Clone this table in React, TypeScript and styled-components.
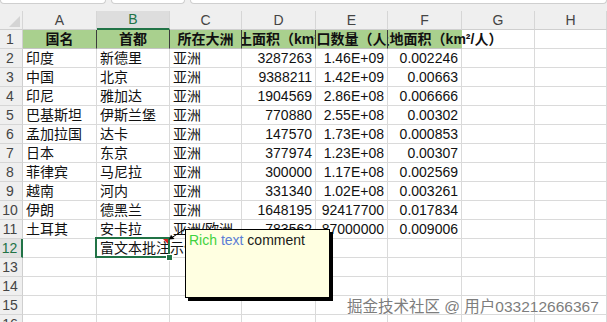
import React from 'react';
import styled, {createGlobalStyle} from 'styled-components';

const GlobalStyle = createGlobalStyle`
  html, body {
    margin: 0;
    padding: 0;
    background: #ffffff;
    overflow: hidden;
  }
  body {
    font-family: "Liberation Sans", "Noto Sans CJK SC", sans-serif;
  }
`;

const COLS = ['A', 'B', 'C', 'D', 'E', 'F', 'G', 'H'];
const WIDTHS = [23, 74, 73, 72, 74, 72, 74, 73, 72];

const HEADERS = ['国名', '首都', '所在大洲', '国土面积（km²）', '人口数量（人）', '人均土地面积（km²/人）'];

const ROWS: string[][] = [
  ['印度', '新德里', '亚洲', '3287263', '1.46E+09', '0.002246'],
  ['中国', '北京', '亚洲', '9388211', '1.42E+09', '0.00663'],
  ['印尼', '雅加达', '亚洲', '1904569', '2.86E+08', '0.006666'],
  ['巴基斯坦', '伊斯兰堡', '亚洲', '770880', '2.55E+08', '0.00302'],
  ['孟加拉国', '达卡', '亚洲', '147570', '1.73E+08', '0.000853'],
  ['日本', '东京', '亚洲', '377974', '1.23E+08', '0.00307'],
  ['菲律宾', '马尼拉', '亚洲', '300000', '1.17E+08', '0.002569'],
  ['越南', '河内', '亚洲', '331340', '1.02E+08', '0.003261'],
  ['伊朗', '德黑兰', '亚洲', '1648195', '92417700', '0.017834'],
  ['土耳其', '安卡拉', '亚洲/欧洲', '783562', '87000000', '0.009006'],
];

const App: React.FC = () => {
  return (
    <Sheet>
      <GlobalStyle />
      <TopBar>
        <Field style={{width: 104}} />
        <Field style={{width: 72}} />
        <Field style={{flex: 1}} />
      </TopBar>

      <Grid>
        <Corner>
          <CornerMark />
        </Corner>
        {COLS.map((c) => (
          <ColHeader key={c} $active={c === 'B'}>
            {c}
          </ColHeader>
        ))}

        <RowHeader>1</RowHeader>
        {HEADERS.map((h, i) => (
          <HeadCell key={h} $last={i === HEADERS.length - 1}>
            <span>{h}</span>
          </HeadCell>
        ))}
        <Cell />
        <Cell />

        {ROWS.map((row, r) => (
          <React.Fragment key={r}>
            <RowHeader>{r + 2}</RowHeader>
            {row.map((v, i) => (
              <Cell key={i} $num={i >= 3}>
                {v}
              </Cell>
            ))}
            <Cell />
            <Cell />
          </React.Fragment>
        ))}

        <RowHeader $active>12</RowHeader>
        <Cell />
        <Cell $selected $overflow>
          富文本批注示例
          <CommentMark />
          <FillHandle />
        </Cell>
        {COLS.slice(2).map((c) => (
          <Cell key={c} />
        ))}

        {[13, 14, 15, 16].map((n) => (
          <React.Fragment key={n}>
            <RowHeader>{n}</RowHeader>
            {COLS.map((c) => (
              <Cell key={c} />
            ))}
          </React.Fragment>
        ))}
      </Grid>

      <Pointer width="24" height="16" viewBox="0 0 24 16">
        <line x1="21" y1="3" x2="8" y2="11.5" stroke="#000" strokeWidth="1" />
        <polygon points="5,13.5 7,8.8 10.5,13" fill="#000" />
      </Pointer>

      <Comment>
        <Green>Rich</Green> <Blue>text</Blue> comment
      </Comment>

      <Watermark>掘金技术社区 @ 用户033212666367</Watermark>
    </Sheet>
  );
};

export default App;

const Sheet = styled.div`
  position: relative;
  width: 607px;
  height: 322px;
  overflow: hidden;
  background: #ffffff;
`;

const TopBar = styled.div`
  display: flex;
  gap: 5px;
  height: 11px;
  background: #efefef;
  align-items: flex-start;
`;

const Field = styled.div`
  height: 3px;
  background: #ffffff;
  border: 1px solid #cfcfcf;
  border-top: none;
  border-radius: 0 0 5px 5px;
`;

const Grid = styled.div`
  display: grid;
  grid-template-columns: ${WIDTHS.map((w) => `${w}px`).join(' ')};
  grid-auto-rows: 19px;
  color: #111;
  font-size: 14px;
`;

const Corner = styled.div`
  position: relative;
  background: #efefef;
  border-right: 1px solid #d6d6d6;
  border-bottom: 1px solid #cfcfcf;
`;

const CornerMark = styled.div`
  position: absolute;
  right: 2px;
  bottom: 2px;
  width: 0;
  height: 0;
  border-left: 11px solid transparent;
  border-bottom: 11px solid #d4d4d4;
`;

const ColHeader = styled.div<{$active?: boolean}>`
  display: flex;
  align-items: center;
  justify-content: center;
  box-sizing: border-box;
  background: ${(p) => (p.$active ? '#dddddd' : '#efefef')};
  color: ${(p) => (p.$active ? '#217346' : '#444')};
  border-right: 1px solid #d6d6d6;
  border-bottom: ${(p) => (p.$active ? '2px solid #217346' : '1px solid #cfcfcf')};
  font-size: 14px;
  line-height: 19px;
`;

const RowHeader = styled.div<{$active?: boolean}>`
  display: flex;
  align-items: center;
  justify-content: center;
  box-sizing: border-box;
  padding-right: 2px;
  background: ${(p) => (p.$active ? '#e2e2e2' : '#efefef')};
  color: ${(p) => (p.$active ? '#217346' : '#444')};
  border-right: ${(p) => (p.$active ? '2px solid #217346' : '1px solid #cfcfcf')};
  border-bottom: 1px solid #d6d6d6;
  font-size: 14px;
`;

const Cell = styled.div<{$num?: boolean; $selected?: boolean; $overflow?: boolean}>`
  position: relative;
  box-sizing: border-box;
  border-right: 1px solid #dadada;
  border-bottom: 1px solid #dadada;
  padding: 0 3px;
  line-height: 18px;
  white-space: nowrap;
  overflow: ${(p) => (p.$overflow ? 'visible' : 'hidden')};
  text-align: ${(p) => (p.$num ? 'right' : 'left')};

  ${(p) =>
    p.$selected &&
    `
    &::after {
      content: '';
      position: absolute;
      left: -2px;
      top: -2px;
      right: -1px;
      bottom: -1px;
      border: 2px solid #217346;
      pointer-events: none;
    }
  `}
`;

const HeadCell = styled.div<{$last?: boolean}>`
  display: flex;
  align-items: center;
  justify-content: center;
  box-sizing: border-box;
  background: #a9d08e;
  border-right: ${(p) => (p.$last ? 'none' : '1px solid #3c3c3c')};
  border-bottom: 1px solid #c4c4c4;
  font-weight: 700;
  white-space: nowrap;
  overflow: ${(p) => (p.$last ? 'visible' : 'hidden')};
  clip-path: ${(p) => (p.$last ? 'inset(0 -120px 0 0)' : 'none')};
  line-height: 18px;

  span {
    flex: none;
  }
`;

const CommentMark = styled.div`
  position: absolute;
  top: 0;
  right: 1px;
  width: 0;
  height: 0;
  border-left: 5px solid transparent;
  border-top: 5px solid #e0201b;
  z-index: 2;
`;

const FillHandle = styled.div`
  position: absolute;
  right: -4px;
  bottom: -4px;
  width: 5px;
  height: 5px;
  background: #217346;
  border: 1px solid #ffffff;
  z-index: 2;
`;

const Pointer = styled.svg`
  position: absolute;
  left: 164px;
  top: 226px;
`;

const Comment = styled.div`
  position: absolute;
  left: 185px;
  top: 229px;
  width: 145px;
  height: 69px;
  box-sizing: border-box;
  padding: 1px 3px;
  background: #ffffe1;
  border: 1px solid #000;
  box-shadow: 3px 3px 0 #000;
  font-family: "Liberation Sans", sans-serif;
  font-size: 14px;
  line-height: 18px;
  color: #1a1a1a;
`;

const Green = styled.span`
  color: #3fd23f;
`;

const Blue = styled.span`
  color: #5b7ed6;
`;

const Watermark = styled.div`
  position: absolute;
  left: 347px;
  top: 297px;
  font-family: "Liberation Sans", "Noto Sans CJK SC", sans-serif;
  font-size: 15.5px;
  line-height: 20px;
  color: #7d7d7d;
  text-shadow: 0 0 2px #ffffff;
  white-space: nowrap;
`;
